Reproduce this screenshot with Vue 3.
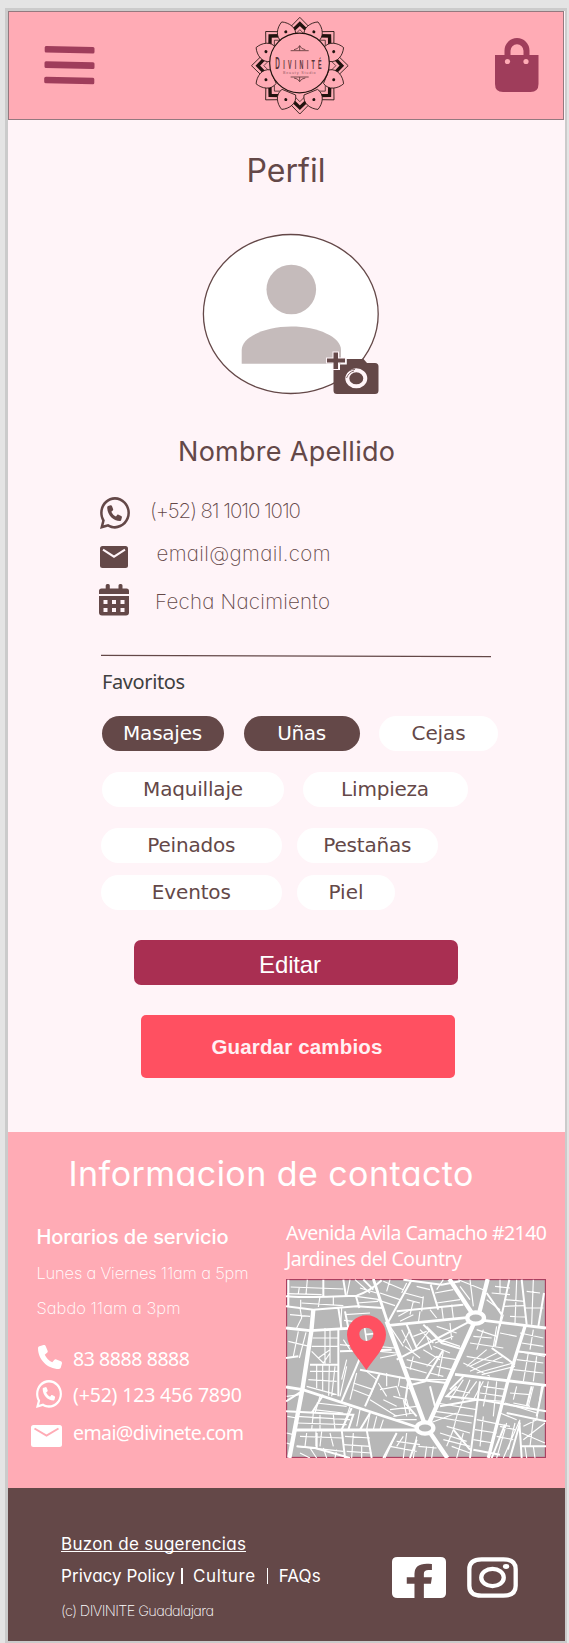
<script setup>
// Spreads the letters of a line so that it fills the given width.
const vFit = {
  mounted(el, { value }) {
    const letters = el.textContent.length
    const natural = el.getBoundingClientRect().width
    el.style.letterSpacing = `${(value - natural) / (letters - 1)}px`
  },
}

const rays = [0, 45, 90, 135, 180, 225, 270, 315]
const chipRows = [
  { name: 'r1', chips: [{ t: 'Masajes', c: 'masajes on', w: 79 }, { t: 'Uñas', c: 'unas on', w: 49 }, { t: 'Cejas', c: 'cejas', w: 54 }] },
  { name: 'r2', chips: [{ t: 'Maquillaje', c: 'maquillaje', w: 100 }, { t: 'Limpieza', c: 'limpieza', w: 88 }] },
  { name: 'r3', chips: [{ t: 'Peinados', c: 'wide', w: 88 }, { t: 'Pestañas', c: 'pestanas', w: 88 }] },
  { name: 'r4', chips: [{ t: 'Eventos', c: 'wide', w: 79 }, { t: 'Piel', c: 'piel', w: 35 }] },
]
const handset = 'M164.9 24.6c-7.7-18.6-28-28.5-47.4-23.2l-88 24C12.1 30.2 0 46 0 64C0 311.4 200.6 512 448 512c18 0 33.8-12.1 38.6-29.5l24-88c5.3-19.4-4.6-39.7-23.2-47.4l-96-40c-16.3-6.8-35.2-2.1-46.3 11.6L304.7 368C234.3 334.7 177.3 277.7 144 207.3L193.3 167c13.7-11.2 18.4-30 11.6-46.3l-40-96z'
const bubble = 'M380.9 97.1C339 55.1 283.2 32 223.9 32c-122.4 0-222 99.6-222 222 0 39.1 10.2 77.3 29.6 111L0 480l117.7-30.9c32.4 17.7 68.9 27 106.1 27h.1c122.3 0 224.1-99.6 224.1-222 0-59.3-25.2-115-67.1-157zm-157 341.6c-33.2 0-65.7-8.9-94-25.7l-6.7-4-69.8 18.3L72 359.2l-4.4-7c-18.5-29.4-28.2-63.3-28.2-98.2 0-101.7 82.8-184.5 184.6-184.5 49.3 0 95.6 19.2 130.4 54.1 34.8 34.9 56.2 81.2 56.1 130.5 0 101.8-84.9 184.6-186.6 184.6z'
</script>

<template>
  <div class="canvas">
    <div class="screen">
      <header class="top">
        <svg class="menu" viewBox="0 0 51 40">
          <g fill="#9f3d5b">
            <path d="M2 1 L49 2 Q50.500 2 50.500 3.500 V7 Q50.500 8.500 49 8.500 L2 7.500 Q.7 7.500 .7 6 V2.500 Q.7 1 2 1Z" />
            <path d="M2 16.300 L49 17.300 Q50.500 17.300 50.500 18.800 V22.500 Q50.500 24 49 24 L2 23 Q.5 23 .5 21.500 V17.800 Q.5 16.300 2 16.300Z" />
            <path d="M2 31.700 L49 32.700 Q50.300 32.700 50.300 34.200 V37.800 Q50.300 39.300 49 39.300 L2 38.300 Q.2 38.300 .2 36.800 V33.200 Q.2 31.700 2 31.700Z" />
          </g>
        </svg>
        <svg class="logo" viewBox="60 45 300 302">
          <g stroke="#21130f" fill="none">
            <g v-for="a in rays" :key="'c' + a" :transform="`translate(209.500 197) rotate(${a})`">
              <path d="M-38 -106 L0 -145 L38 -106" stroke-width="2.500" />
              <path d="M-24 -103 L0 -126 L24 -103" stroke-width="10" />
              <path d="M-16 -92 L0 -108 L16 -92" stroke-width="2" />
            </g>
            <g v-for="a in rays" :key="'p' + a" :transform="`translate(209.500 197) rotate(${a + 22.5})`">
              <path d="M-22 -86 C-36 -108 -20 -132 0 -142 C20 -132 36 -108 22 -86Z" fill="#ffabb5" stroke-width="2.300" />
              <circle cy="-110" r="4.500" fill="#21130f" stroke="none" />
            </g>
            <circle cx="208.500" cy="189" r="89.500" fill="#ffabb5" stroke-width="3.500" />
            <path d="M182 152 H236 M192 149 Q204 148 209 137 Q214 148 226 149 M209 137 V152 M182 231 H236 M192 234 Q204 235 209 245 Q214 235 226 234 M209 231 V245" stroke="#5a3535" stroke-width="2.500" />
          </g>
          <text class="logo-name" transform="translate(136 206) scale(.4 1)" textLength="347"><tspan class="logo-cap">D</tspan>IVINITÉ</text>
          <text class="logo-sub" x="159" y="222" textLength="98">Beauty Studio</text>
        </svg>
        <svg class="bag" viewBox="0 0 44 54">
          <path fill="#9f3d5b" fill-rule="evenodd" d="M0 17 H9.500 V12.500 A12.500 12.500 0 0 1 34.500 12.500 V17 H43.500 V46 Q43.500 54 35.500 54 H8 Q0 54 0 46Z M15.500 17 H28.500 V12.800 A6.500 6.500 0 0 0 15.500 12.800Z" />
          <circle cx="12.500" cy="23.500" r="2.600" fill="#ffabb5" /><circle cx="31" cy="23.500" r="2.600" fill="#ffabb5" />
        </svg>
      </header>

      <main>
        <h1><span v-fit="79">Perfil</span></h1>
        <svg class="avatar" viewBox="0 0 178 162">
          <ellipse cx="88.800" cy="81" rx="87.400" ry="79.500" fill="#fff" stroke="#644848" stroke-width="1.300" />
          <circle cx="89.300" cy="56.500" r="24.800" fill="#c5bbbb" />
          <path d="M39.700 130.800 V117 C39.700 104 63 93.500 89.300 93.500 C116 93.500 139 104 139 117 V130.800Z" fill="#c5bbbb" />
          <path d="M144.800 126 H161.500 L165 130 H173 Q176.500 130 176.500 133.500 V157.500 Q176.500 161 173 161 H135 Q131.500 161 131.500 157.500 V137 H138 V131.500 H144.800Z" fill="#644848" />
          <path d="M131.500 119.500h4.500v6h7v4h-7v6.500h-4.500v-6.500h-6.500v-4h6.500z" fill="#644848" stroke="#fff4f8" stroke-width="2" paint-order="stroke" />
          <ellipse cx="154.300" cy="145.300" rx="9" ry="8" fill="none" stroke="#fff4f8" stroke-width="4" />
          <path d="M143 143 Q146 136 153 136.500 M144.500 145 Q147 139 152 138" fill="none" stroke="#644848" stroke-width=".8" />
        </svg>
        <h2><span v-fit="217">Nombre Apellido</span></h2>
        <ul class="details">
          <li class="d-phone">
            <svg viewBox="0 31 449 450" preserveAspectRatio="none"><path :d="bubble" /><path :d="handset" transform="translate(108 148) scale(.43)" /></svg>
            <span v-fit="151">(+52) 81 1010 1010</span>
          </li>
          <li class="d-mail">
            <svg viewBox="0 0 28 22"><rect width="28" height="22" rx="2.500" /><path d="M3 3.700 L14 10.700 L25 3.700" fill="none" stroke="#fff4f8" stroke-width="2" /></svg>
            <span v-fit="174">email@gmail.com</span>
          </li>
          <li class="d-date">
            <svg viewBox="0 0 30 32"><path fill-rule="evenodd" d="M0 10V7Q0 4.500 2.500 4.500H6.700V1.500Q6.700 0 8.200 0H9.300Q10.800 0 10.800 1.500V4.500H19.500V1.500Q19.500 0 21 0H22Q23.500 0 23.500 1.500V4.500H27.500Q30 4.500 30 7V10Z M0 12H30V28.500Q30 31.500 27 31.500H3Q0 31.500 0 28.500Z M4.500 16v4h4v-4zm8.500 0v4h4v-4zm8.500 0v4h4v-4zM4.500 24v4h4v-4zm8.500 0v4h4v-4zm8.500 0v4h4v-4z" /></svg>
            <span v-fit="175">Fecha Nacimiento</span>
          </li>
        </ul>
        <svg class="rule" viewBox="0 0 390 4"><path d="M0 1.300 L390 2.700" stroke="#644848" stroke-width="1.300" /></svg>
        <h3><span v-fit="83">Favoritos</span></h3>
        <div v-for="row in chipRows" :key="row.name" class="chips" :class="row.name">
          <button v-for="chip in row.chips" :key="chip.t" class="chip" :class="chip.c"><span v-fit="chip.w">{{ chip.t }}</span></button>
        </div>
        <button class="edit"><span v-fit="62">Editar</span></button>
        <button class="save"><span v-fit="171">Guardar cambios</span></button>
      </main>

      <section class="contact">
        <h2 class="contact-title"><span v-fit="405">Informacion de contacto</span></h2>
        <div class="columns">
          <div class="hours">
            <h4><span v-fit="192">Horarios de servicio</span></h4>
            <p><span v-fit="212">Lunes a Viernes 11am a 5pm</span></p>
            <p><span v-fit="144">Sabdo 11am a 3pm</span></p>
            <ul class="ways">
              <li><svg class="w-call" viewBox="0 0 512 512"><path :d="handset" /></svg><span v-fit="117">83 8888 8888</span></li>
              <li><svg class="w-chat" viewBox="0 31 449 450" preserveAspectRatio="none"><path :d="bubble" /><path :d="handset" transform="translate(115 145) scale(.42)" /></svg><span v-fit="169">(+52) 123 456 7890</span></li>
              <li><svg class="w-mail" viewBox="0 0 31 22"><rect width="31" height="22" rx="2.500" /><path d="M3.500 3.500 L15.500 10.500 L27.500 3.500" fill="none" stroke="#ffabb5" stroke-width="2" /></svg><span v-fit="171">emai@divinete.com</span></li>
            </ul>
          </div>
          <div class="place">
            <p><span v-fit="261">Avenida Avila Camacho #2140</span></p>
            <p><span v-fit="176">Jardines del Country</span></p>
            <svg class="map" viewBox="48 238 780 537" preserveAspectRatio="none">
              <rect x="48" y="238" width="780" height="537" fill="#b7b7b7" />
              <rect x="49.500" y="239.500" width="777" height="534" fill="none" stroke="#aa4060" stroke-width="4" />
              <g fill="none" stroke="#fff">
                <path stroke-width="3.500" d="M62 262L220 268M52 282L155 285M112 240L108 285M88 262L85 282M95 310L220 318M92 300V322M150 290L145 322M190 290V318M60 345L120 350M90 325L95 355L80 385M215 325L212 385M225 345L300 340M222 362L250 365M165 385V495M180 390V490M85 395L70 470M108 398L88 475M55 425L118 440M128 415H205M125 440H205M125 455L160 490L180 460M145 475L180 450M120 515H205M115 540L200 545M140 495V565M158 495V575M178 495L176 588M195 500L185 590M110 560L200 585M255 240L300 280M240 240L230 290M258 290L330 300M260 310L325 305M270 265L320 280M340 245L400 270M330 280L390 300M320 300L375 318M360 240L350 275M410 250L395 280M405 280L460 295M410 300L450 310M440 260L480 270M460 290L455 335M430 305L420 345M495 280L550 270M500 310L570 300M515 320L520 360M545 315L550 355M480 330L500 355M385 350L420 330M390 365L430 345M450 335L445 370M565 240L640 270M570 260L600 300M600 240L610 320M520 240L500 270M650 300L690 330M665 280L720 285M675 260L720 265M705 300L765 305M700 320L765 318M720 350L765 352M690 240L690 280M740 240L735 370M790 240L785 375M810 280L770 275M765 325H820M700 345L690 380M395 390L430 460M420 390L400 430M450 390L490 430M470 380L510 420M430 410L470 395M440 440L480 390M495 430L550 410M500 380L560 400M540 370L545 420M470 410L485 450M405 440L450 475M410 480L490 500M430 470L420 510M400 500L470 520M460 450L510 480M490 440L540 460M510 420L570 440M470 500L500 470L560 480M455 540L540 540M500 500L545 510M480 520L520 530M520 455L505 530M620 390L680 410M610 410L665 415M600 430L700 445M640 390L620 450M590 470L700 490M600 500L680 460M600 515L700 470M620 520L730 490M635 525L735 500M580 490L660 530M650 450L590 500M690 400L740 410M680 380L670 440M750 400L820 415M755 430L820 440M745 455L825 470M740 480L820 490M730 510L820 520M790 390L780 450M775 460L760 545M800 470L790 545M740 560L730 600M720 580L780 585M730 610L780 620M790 560L775 620M815 560L800 660M580 540L540 600M600 540L575 600M620 545L580 600M640 545L610 600M550 570L600 580M540 590L625 600M640 560L710 570M630 580L700 590M625 600L700 605M680 545L670 650M655 545L640 620M500 610L620 630M495 635L610 650M490 650L605 670M530 680L600 700M510 700L590 725M520 720L600 740M480 670L560 640M560 650L550 690M580 600L560 650M550 690L530 740M580 700L560 775M545 740L600 760M620 660L720 680M615 690L680 700M610 720L670 730M640 650L630 740M705 610L800 640M690 640L740 660M690 680L735 690M680 710L730 720M710 670L680 775M735 670L715 750M760 680L800 660M755 700L825 730M760 720L825 670M790 660L780 740M765 740L770 775M790 740L795 775M750 660L700 775M230 500L210 590M250 550L310 570M250 570L300 590M260 520L240 600M290 515L320 540M320 540L300 590M330 570L380 560L390 590M340 600L380 620M325 550L350 590M390 560L430 570M370 590L410 600L420 640M350 520V560M390 530L385 560M300 600L380 650M360 630L440 620M370 650L430 640M380 660L440 660M400 600L410 650M140 610L230 620M130 630L220 640M150 590L135 640M240 620L220 680M270 630L260 680M300 640L290 690M320 650L310 690M340 660L330 690M80 650L240 660M80 670L230 675M130 640L125 690M150 645V690M190 645L195 690M50 590L90 585M52 650L80 655M50 700L70 705M50 730L65 735M90 710L220 715M80 740L220 755M110 700L105 740M138 695V740M155 695L150 740M180 700L190 740M225 710L300 715M220 735L300 740M230 755L305 760M250 700L245 775M275 740V775M90 760L120 775M120 745L140 775M160 745L170 775M200 750L195 775M380 700L345 775M400 710L380 740M410 700L400 775M440 710L430 775M360 740L440 755M380 725L450 735M445 740L500 745M470 740L465 775M490 740L485 775M320 440L375 445M330 455L380 460M330 475L380 465M220 420L240 450M210 435L240 438M360 380L400 440M230 480L215 540" />
                <path stroke-width="6" d="M55 240V320M48 290Q90 295 260 288Q300 275 335 242M160 240V290M220 240L228 290M48 320L130 330L260 320L340 325M258 290L268 325M225 335L235 385M205 325L215 390M48 475L85 470M205 390L205 590M120 495H205M210 455L365 450M280 240L310 270M425 240L350 375M400 240L515 255L570 245M380 335L580 315M482 255L505 330M380 480L600 365M410 375L440 445M460 375L515 430L580 450M400 535L530 550M425 555L465 545L490 500L520 450M270 475L215 605M270 510L400 535M330 520L285 620M415 540L405 610L440 650M650 280L695 345M718 240L675 440M755 240L770 375M822 280L805 380M665 445L735 495M740 455L828 465M560 560L530 590L630 600L828 635M630 545L600 775M580 530L540 570M480 560L495 620M48 605L95 575M48 635L250 645L235 690M160 585L125 640M245 625L215 690M300 640L270 690M215 690L225 775M290 690L305 775M80 740L135 745L240 775M140 700V745M380 700L340 775M440 720L420 775M510 620L620 600M550 690L600 750M710 640L828 665M705 675L665 775M750 670L720 775M748 665L755 775M755 740H828M610 750L690 765M820 555L800 650M785 560L770 620" />
                <path stroke-width="8.500" d="M350 378L590 354M640 362L828 385M48 385L120 393L235 386M48 562L98 570L440 682M70 691H445M555 524L828 557M310 238L355 375" />
                <path stroke-width="13" d="M130 330L124 395L97 570L58 775M350 365L463 670M538 238L607 342M653 238L627 342M612 370L478 668M481 700L532 775" />
                <path stroke-width="10" d="M765 380L712 550L655 775" />
                <path stroke-width="5" d="M284 385L290 425M286 405L312 402" />
                <ellipse cx="617" cy="355" rx="25" ry="17" fill="#b7b7b7" stroke-width="13" />
                <ellipse cx="465" cy="685" rx="25" ry="17" fill="#b7b7b7" stroke-width="13" />
              </g>
              <path fill="#ff5061" fill-rule="evenodd" d="M289 511C270 480 231 444 231 405A58.500 58.500 0 0 1 348 405C348 444 309 480 289 511Z M289 384A21 20 0 1 0 289 424A21 20 0 1 0 289 384Z" />
            </svg>
          </div>
        </div>
      </section>

      <footer>
        <div class="links">
          <p class="u"><span v-fit="185">Buzon de sugerencias</span></p>
          <p class="policy"><span v-fit="114">Privacy Policy</span><i></i><span v-fit="62">Culture</span><i></i><span v-fit="42">FAQs</span></p>
          <p class="copy"><span v-fit="153">(c) DIVINITE Guadalajara</span></p>
        </div>
        <svg class="fb" viewBox="0 0 161 122"><path fill="#fff" d="M16 0H145Q161 0 161 14V108Q161 122 145 122H95V80H116L119 60H95V50Q95 39 109 39H119V21Q112 19 104 20Q67 20 67 50V60H44V80H67V122H16Q0 122 0 108V14Q0 0 16 0Z" /></svg>
        <svg class="ig" viewBox="0 0 154 122"><g fill="none" stroke="#fff"><path stroke-width="13" d="M44 6H110Q147 6 147 36V86Q147 116 110 116H44Q7 116 7 86V36Q7 6 44 6Z" /><ellipse cx="77" cy="61" rx="34" ry="26" stroke-width="13" /></g><ellipse cx="118" cy="28" rx="9.500" ry="7.500" fill="#fff" /></svg>
      </footer>
    </div>
  </div>
</template>

<style>
body { margin: 0; background: #e4e4e4; }
</style>

<style scoped>
* { box-sizing: border-box; }
h1, h2, h3, h4, p, ul { margin: 0; padding: 0; font-weight: 400; list-style: none; }
svg { display: block; flex: none; }
span { white-space: nowrap; }
button { border: 0; padding: 0; display: block; }
.canvas { height: 1643px; padding: 8px 2px 0 5px; overflow: hidden; background: #e4e4e4; }
.screen { height: 1635px; border: 3px solid #cbcbcb; border-right-width: 2px; border-bottom-width: 2px; background: #fff4f8; color: #644848; font-family: Inter, sans-serif; font-feature-settings: "cv11"; width: 562px; }
.top { height: 108.500px; margin-right: 1px; border: 1px solid #94797f; border-bottom-width: 1.500px; background: #ffabb5; display: flex; align-items: flex-start; }
.menu { width: 51px; height: 40px; margin: 33px 0 0 35px; }
.logo { width: 100px; height: 100.700px; margin: 3px 0 0 155px; }
.logo-name { font: bold 40px "Liberation Sans", sans-serif; fill: #5a3538; }
.logo-cap { font-size: 47px; }
.logo-sub { font: 11px "Liberation Sans", sans-serif; fill: #965f67; }
.bag { width: 44px; height: 54px; margin: 26px 0 0 145px; }

main { height: 1012.500px; display: flow-root; }
h1 { margin: 30.500px 0 0 238.500px; font-size: 32px; line-height: 42px; }
.avatar { width: 178px; height: 162px; margin: 41px 0 0 194px; }
h2 { margin: 39px 0 0 170px; font-size: 27px; line-height: 36px; }
.details { font-size: 20.500px; font-weight: 200; line-height: 28px; }
.details li { display: flex; align-items: flex-start; }
.details svg { fill: #644848; }
.d-phone { height: 48px; margin: 26.500px 0 0 92px; }
.d-phone svg { width: 30px; height: 32px; margin-top: .5px; }
.d-phone span { margin: 0 0 0 20px; }
.d-mail { height: 38px; padding-left: 92px; }
.d-mail svg { width: 28px; height: 22px; margin-top: 1px; }
.d-mail span { margin: -5px 0 0 28.500px; }
.d-date { height: 32px; padding-left: 91px; }
.d-date svg { width: 30px; height: 32px; margin-top: 1px; }
.d-date span { margin: 5px 0 0 26px; }
.rule { width: 390px; height: 4px; margin: 39.500px 0 0 93px; }
h3 { margin: 10px 0 0 94px; font: 20px/28px "Noto Sans", sans-serif; color: #404040; }
.chips { display: flex; }
.r1 { margin: 19.500px 0 0 94px; }
.r2 { margin: 21px 0 0 94px; gap: 18.500px; }
.r3 { margin: 21px 0 0 93px; gap: 15.500px; }
.r4 { margin: 12px 0 0 93px; gap: 15.500px; }
.chip { height: 35px; border-radius: 17.500px; background: #fff; color: #644848; font: 20px/34px "DejaVu Sans", sans-serif; }
.on { background: #644848; color: #fff; }
.masajes { width: 122px; padding-right: 1px; }
.unas { width: 116px; margin: 0 19.500px; }
.cejas { width: 119px; }
.maquillaje { width: 182px; }
.limpieza { width: 165px; }
.wide { width: 180.500px; }
.pestanas { width: 140.500px; }
.piel { width: 98px; }
.edit { width: 324px; height: 45.500px; margin: 30px 0 0 126px; padding: 2px 12px 0 0; border-radius: 7px; background: #a92f52; color: #fff; font: 24px/45px "Liberation Sans", Arial, sans-serif; }
.save { width: 314px; height: 63px; margin: 29.500px 0 0 133px; padding-right: 2px; border-radius: 5px; background: #ff5061; color: #fff0f4; font: bold 20.500px/63px "Liberation Sans", Arial, sans-serif; }

.contact { height: 355.500px; background: #ffabb5; color: #fff; display: flow-root; }
.contact-title { margin: 19px 0 0 60.500px; font-size: 34px; line-height: 46px; }
.columns { display: flex; }
.hours { width: 249px; padding: 26px 0 0 28.500px; }
h4 { font-size: 20px; line-height: 28px; font-weight: 480; }
.hours p { font-size: 16.500px; font-weight: 250; line-height: 24px; margin-top: 10px; }
.hours p + p { margin-top: 11px; }
.ways { margin-top: 23px; font: 19.500px "Noto Sans", sans-serif; }
.ways li { height: 36px; display: flex; align-items: flex-start; margin-left: -5.500px; }
.ways li + li + li { margin-top: 1px; }
.ways svg { fill: #fff; }
.ways span { line-height: 28px; margin-top: 2px; }
.ways li + li + li span { margin-top: 3px; }
.w-call { width: 24px; height: 24px; margin: 2px 11px 0 7px; }
.w-chat { width: 26px; height: 28px; margin: 1px 11px 0 5px; }
.w-mail { width: 31px; height: 22px; margin: 9px 11px 0 0; }
.place { padding: 23px 0 0 29px; }
.place p { font: 19.500px/26px "Noto Sans", sans-serif; }
.map { width: 260px; height: 179px; margin-top: 7px; }

footer { height: 153.500px; background: #644848; color: #fff; display: flex; align-items: flex-start; }
.links { width: 383.500px; padding: 44px 0 0 53px; font-size: 17px; font-weight: 480; line-height: 24px; }
.u span { border-bottom: 1px solid #fff; display: inline-block; height: 20px; line-height: 24px; }
.policy { display: flex; margin-top: 8px; }
.policy i { width: 1.500px; height: 16px; background: #fff; margin: 4px 10.500px 0 11px; }
.policy i:nth-of-type(1) { margin-left: 6px; }
.copy { font-size: 14.500px; font-weight: 250; margin-top: 11px; }
.fb { width: 54px; height: 41px; margin-top: 69px; }
.ig { width: 51px; height: 41px; margin: 69px 0 0 21px; }
</style>
